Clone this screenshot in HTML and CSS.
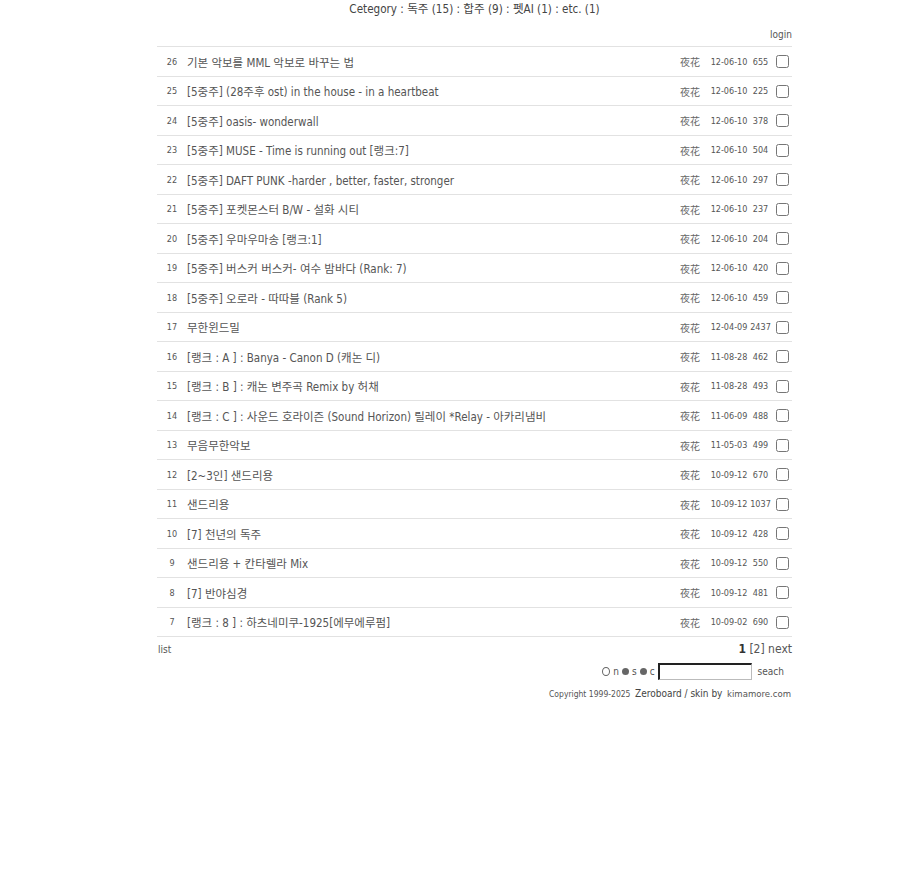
FILE: index.html
```
<!DOCTYPE html>
<html lang="ko">
<head>
<meta charset="utf-8">
<title>board</title>
<link rel="stylesheet" href="styles.css">
</head>
<body>
<div class="wrap">
  <div class="cat">Cetegory : 독주 (15) : 합주 (9) : 펫AI (1) : etc. (1)</div>
  <div class="login">login</div>
  <div class="list">
    <div class="row"><span class="no">26</span><span class="title">기본 악보를 MML 악보로 바꾸는 법</span><span class="name">夜花</span><span class="date">12-06-10</span><span class="hit">655</span><span class="chk"><input type="checkbox"></span></div>
    <div class="row"><span class="no">25</span><span class="title">[5중주] (28주후 ost) in the house - in a heartbeat</span><span class="name">夜花</span><span class="date">12-06-10</span><span class="hit">225</span><span class="chk"><input type="checkbox"></span></div>
    <div class="row"><span class="no">24</span><span class="title">[5중주] oasis- wonderwall</span><span class="name">夜花</span><span class="date">12-06-10</span><span class="hit">378</span><span class="chk"><input type="checkbox"></span></div>
    <div class="row"><span class="no">23</span><span class="title">[5중주] MUSE - Time is running out [랭크:7]</span><span class="name">夜花</span><span class="date">12-06-10</span><span class="hit">504</span><span class="chk"><input type="checkbox"></span></div>
    <div class="row"><span class="no">22</span><span class="title">[5중주] DAFT PUNK -harder , better, faster, stronger</span><span class="name">夜花</span><span class="date">12-06-10</span><span class="hit">297</span><span class="chk"><input type="checkbox"></span></div>
    <div class="row"><span class="no">21</span><span class="title">[5중주] 포켓몬스터 B/W - 설화 시티</span><span class="name">夜花</span><span class="date">12-06-10</span><span class="hit">237</span><span class="chk"><input type="checkbox"></span></div>
    <div class="row"><span class="no">20</span><span class="title">[5중주] 우마우마송 [랭크:1]</span><span class="name">夜花</span><span class="date">12-06-10</span><span class="hit">204</span><span class="chk"><input type="checkbox"></span></div>
    <div class="row"><span class="no">19</span><span class="title">[5중주] 버스커 버스커- 여수 밤바다 (Rank: 7)</span><span class="name">夜花</span><span class="date">12-06-10</span><span class="hit">420</span><span class="chk"><input type="checkbox"></span></div>
    <div class="row"><span class="no">18</span><span class="title">[5중주] 오로라 - 따따블 (Rank 5)</span><span class="name">夜花</span><span class="date">12-06-10</span><span class="hit">459</span><span class="chk"><input type="checkbox"></span></div>
    <div class="row"><span class="no">17</span><span class="title">무한윈드밀</span><span class="name">夜花</span><span class="date">12-04-09</span><span class="hit">2437</span><span class="chk"><input type="checkbox"></span></div>
    <div class="row"><span class="no">16</span><span class="title">[랭크 : A ] : Banya - Canon D (캐논 디)</span><span class="name">夜花</span><span class="date">11-08-28</span><span class="hit">462</span><span class="chk"><input type="checkbox"></span></div>
    <div class="row"><span class="no">15</span><span class="title">[랭크 : B ] : 캐논 변주곡 Remix by 허채</span><span class="name">夜花</span><span class="date">11-08-28</span><span class="hit">493</span><span class="chk"><input type="checkbox"></span></div>
    <div class="row"><span class="no">14</span><span class="title">[랭크 : C ] : 사운드 호라이즌 (Sound Horizon) 릴레이 *Relay - 아카리냄비</span><span class="name">夜花</span><span class="date">11-06-09</span><span class="hit">488</span><span class="chk"><input type="checkbox"></span></div>
    <div class="row"><span class="no">13</span><span class="title">무음무한악보</span><span class="name">夜花</span><span class="date">11-05-03</span><span class="hit">499</span><span class="chk"><input type="checkbox"></span></div>
    <div class="row"><span class="no">12</span><span class="title">[2~3인] 샌드리용</span><span class="name">夜花</span><span class="date">10-09-12</span><span class="hit">670</span><span class="chk"><input type="checkbox"></span></div>
    <div class="row"><span class="no">11</span><span class="title">샌드리용</span><span class="name">夜花</span><span class="date">10-09-12</span><span class="hit">1037</span><span class="chk"><input type="checkbox"></span></div>
    <div class="row"><span class="no">10</span><span class="title">[7] 천년의 독주</span><span class="name">夜花</span><span class="date">10-09-12</span><span class="hit">428</span><span class="chk"><input type="checkbox"></span></div>
    <div class="row"><span class="no">9</span><span class="title">샌드리용 + 칸타렐라 Mix</span><span class="name">夜花</span><span class="date">10-09-12</span><span class="hit">550</span><span class="chk"><input type="checkbox"></span></div>
    <div class="row"><span class="no">8</span><span class="title">[7] 반야심경</span><span class="name">夜花</span><span class="date">10-09-12</span><span class="hit">481</span><span class="chk"><input type="checkbox"></span></div>
    <div class="row"><span class="no">7</span><span class="title">[랭크 : 8 ] : 하츠네미쿠-1925[에무에루펌]</span><span class="name">夜花</span><span class="date">10-09-02</span><span class="hit">690</span><span class="chk"><input type="checkbox"></span></div>
  </div>
  <div class="foot">
    <span class="listlink">list</span>
    <span class="pages"><b>1</b> [2] next</span>
  </div>
  <div class="search">
    <span class="opt"><span class="dot open"></span>n<span class="dot"></span>s<span class="dot"></span>c</span>
    <input type="text" class="kw">
    <span class="go">seach</span>
  </div>
  <div class="copy"><span class="s9">Copyright 1999-2025</span> <span class="s11">Zeroboard / skin by</span> <span class="s10">kimamore.com</span></div>
</div>
</body>
</html>
```
FILE: styles.css
```
html, body {
  margin: 0;
  padding: 0;
  background: #fff;
}
body {
  font-family: "DejaVu Sans Condensed", "DejaVu Sans", "Noto Sans CJK KR", sans-serif;
  color: #555;
}
.wrap {
  width: 635px;
  margin-left: 157px;
}
.cat {
  height: 18px;
  line-height: 18px;
  font-size: 11.6px;
  text-align: center;
  color: #444;
}
.login {
  margin-top: 10px;
  height: 14px;
  line-height: 14px;
  font-size: 10px;
  text-align: right;
  color: #555;
}
.list {
  margin-top: 4px;
  border-top: 1px solid #e2e2e2;
}
.row {
  display: grid;
  grid-template-columns: 30px 1fr 32px 42px 21px 21px;
  align-items: center;
  height: 27.5px;
  border-bottom: 1px solid #e2e2e2;
  padding-top: 1px;
  box-sizing: content-box;
}
.row .no {
  font-size: 9px;
  text-align: center;
  color: #555;
}
.row .title {
  font-size: 11.5px;
  color: #555;
  white-space: nowrap;
  overflow: hidden;
}
.row .name {
  font-size: 10px;
  text-align: center;
  padding-right: 4px;
  color: #666;
  font-family: "Noto Sans CJK KR", sans-serif;
}
.row .date {
  font-size: 9px;
  text-align: center;
  color: #555;
}
.row .hit {
  font-size: 9px;
  text-align: center;
  color: #555;
  white-space: nowrap;
}
.row .chk {
  display: flex;
  justify-content: flex-end;
  padding-right: 3px;
}
.row .chk input {
  margin: 0;
  width: 13px;
  height: 13px;
}
.foot {
  display: flex;
  justify-content: space-between;
  align-items: center;
  height: 24px;
}
.listlink {
  font-size: 10px;
  color: #555;
  padding-left: 1px;
}
.pages {
  font-size: 12px;
  color: #555;
}
.pages b {
  color: #333;
}
.search {
  display: flex;
  justify-content: flex-end;
  align-items: center;
  height: 21px;
  font-size: 10px;
  color: #555;
}
.opt {
  display: flex;
  align-items: center;
  gap: 3px;
  margin-right: 3px;
}
.dot {
  display: inline-block;
  width: 7px;
  height: 7px;
  border-radius: 50%;
  background: #666;
}
.dot.open {
  background: #fff;
  border: 1px solid #666;
  width: 6px;
  height: 7px;
  box-sizing: content-box;
}
.kw {
  width: 94px;
  height: 17px;
  box-sizing: border-box;
  margin: 0;
  padding: 0;
  border-top: 2px solid #222;
  border-left: 2px solid #222;
  border-right: 1px solid #bbb;
  border-bottom: 1px solid #bbb;
  border-radius: 0;
  background: #fff;
}
.go {
  margin-left: 6px;
  margin-right: 8px;
}
.copy {
  height: 20px;
  line-height: 20px;
  text-align: right;
  color: #555;
  padding-right: 1px;
}
.s9 { font-size: 8.5px; }
.s11 { font-size: 10px; color: #444; }
.s10 { font-size: 9.5px; }
```
